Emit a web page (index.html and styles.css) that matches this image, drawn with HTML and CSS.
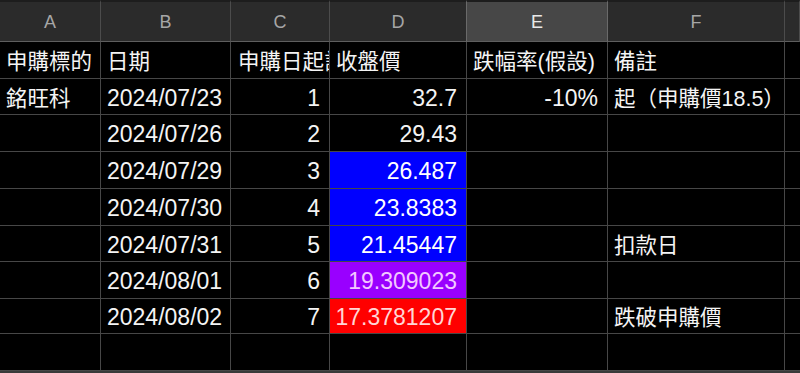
FILE: index.html
```html
<!DOCTYPE html>
<html lang="zh-Hant">
<head>
<meta charset="utf-8">
<title>申購標的</title>
<link rel="stylesheet" href="styles.css">
</head>
<body>
<div class="sheet">
  <div class="hd">A</div>
  <div class="hd">B</div>
  <div class="hd">C</div>
  <div class="hd">D</div>
  <div class="hd sel">E</div>
  <div class="hd">F</div>
  <div class="hd"></div>

  <div class="c zh">申購標的</div>
  <div class="c zh">日期</div>
  <div class="c zh clip">申購日起計算</div>
  <div class="c zh">收盤價</div>
  <div class="c zh">跌幅率(假設)</div>
  <div class="c zh">備註</div>
  <div class="c"></div>

  <div class="c zh">銘旺科</div>
  <div class="c">2024/07/23</div>
  <div class="c num">1</div>
  <div class="c num">32.7</div>
  <div class="c num">-10%</div>
  <div class="c zh">起（申購價18.5）</div>
  <div class="c"></div>

  <div class="c"></div>
  <div class="c">2024/07/26</div>
  <div class="c num">2</div>
  <div class="c num">29.43</div>
  <div class="c"></div>
  <div class="c"></div>
  <div class="c"></div>

  <div class="c"></div>
  <div class="c">2024/07/29</div>
  <div class="c num">3</div>
  <div class="c num blue">26.487</div>
  <div class="c"></div>
  <div class="c"></div>
  <div class="c"></div>

  <div class="c"></div>
  <div class="c">2024/07/30</div>
  <div class="c num">4</div>
  <div class="c num blue">23.8383</div>
  <div class="c"></div>
  <div class="c"></div>
  <div class="c"></div>

  <div class="c"></div>
  <div class="c">2024/07/31</div>
  <div class="c num">5</div>
  <div class="c num blue">21.45447</div>
  <div class="c"></div>
  <div class="c zh">扣款日</div>
  <div class="c"></div>

  <div class="c"></div>
  <div class="c">2024/08/01</div>
  <div class="c num">6</div>
  <div class="c num purple">19.309023</div>
  <div class="c"></div>
  <div class="c"></div>
  <div class="c"></div>

  <div class="c"></div>
  <div class="c">2024/08/02</div>
  <div class="c num">7</div>
  <div class="c num red">17.3781207</div>
  <div class="c"></div>
  <div class="c zh">跌破申購價</div>
  <div class="c"></div>

  <div class="c"></div>
  <div class="c"></div>
  <div class="c"></div>
  <div class="c"></div>
  <div class="c"></div>
  <div class="c"></div>
  <div class="c"></div>
</div>
</body>
</html>
```

FILE: styles.css
```css
html, body {
  margin: 0;
  padding: 0;
  background: #000;
  overflow: hidden;
}

body {
  width: 800px;
  height: 373px;
  font-family: "Liberation Sans", Arial, "Noto Sans CJK TC", sans-serif;
  color: #f4f4f4;
}

.sheet {
  display: grid;
  grid-template-columns: 101px 130px 99px 137px 141px 177px 15px;
  grid-template-rows: 42px 37px 36px 37px 37px 37px 36px 37px 35px 37px;
  height: 373px;
  overflow: hidden;
  border-bottom: 2px solid #3a3a3a;
  box-sizing: border-box;
}

.hd {
  background: #2b2b2b;
  border-top: 2px solid #1d1d1d;
  border-right: 1px solid #4c4c4c;
  border-bottom: 1px solid #5e5e5e;
  color: #a6a6a6;
  font-family: "Liberation Sans", Arial, sans-serif;
  font-size: 18px;
  display: flex;
  align-items: center;
  justify-content: center;
  padding-top: 1px;
}

.hd.sel {
  background: #474747;
  color: #e8e8e8;
  border-right-color: #6a6a6a;
  border-left: 1px solid #6a6a6a;
  margin-left: -1px;
}

.c {
  border-right: 1px solid #474747;
  border-bottom: 1px solid #474747;
  display: flex;
  align-items: center;
  padding: 3px 9px 0 6px;
  font-size: 23px;
  white-space: nowrap;
  overflow: hidden;
  min-width: 0;
}

.c.zh {
  font-size: 21.5px;
  padding-top: 0;
  padding-bottom: 1px;
}

.c.clip {
  padding-left: 7px;
  padding-right: 0;
}

.num {
  justify-content: flex-end;
}

.blue {
  background: #0000ff;
  color: #ffffff;
}

.purple {
  background: #9900ff;
  color: #f3c8ff;
}

.red {
  background: #ff0000;
  color: #ffd6d6;
}
```
